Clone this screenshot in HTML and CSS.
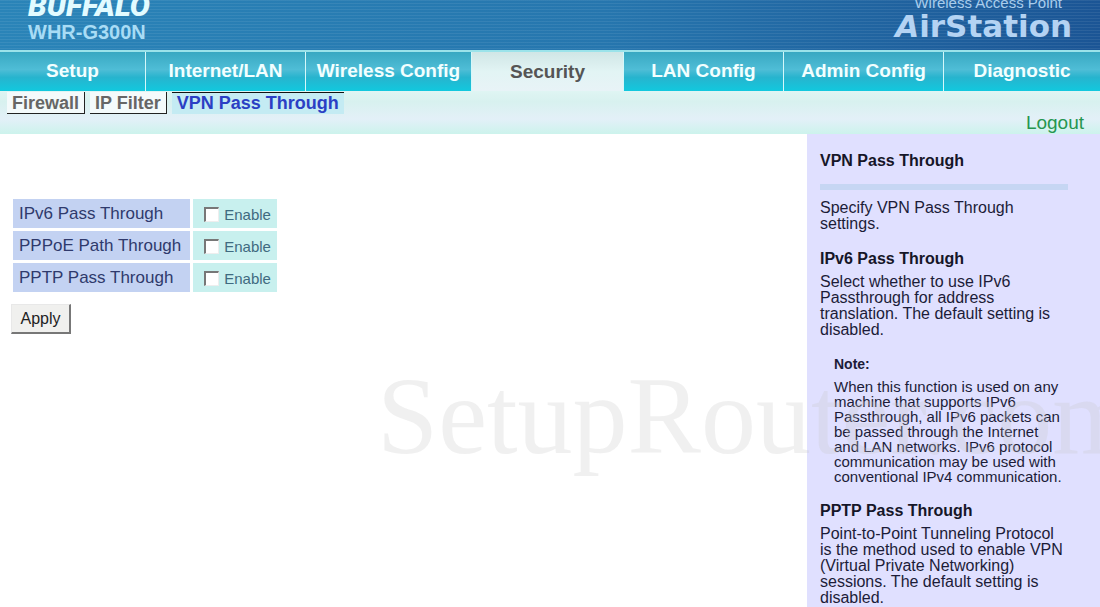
FILE: index.html
```html
<!DOCTYPE html>
<html lang="en">
  <head>
    <meta charset="UTF-8" />
    <title>VPN Pass Through</title>
    <link rel="stylesheet" href="styles.css">
  </head>
  <body>
    <header class="header">
      <div class="brand">
        <strong class="logo">BUFFALO</strong>
        <span class="model">WHR-G300N</span>
      </div>
      <div class="product">
        <span class="tagline">Wireless Access Point</span>
        <span class="airstation"><i>A</i>irStation</span>
      </div>
    </header>

    <nav class="menu">
      <a href="#">Setup</a>
      <a href="#">Internet/LAN</a>
      <a href="#">Wireless Config</a>
      <a href="#" class="active">Security</a>
      <a href="#">LAN Config</a>
      <a href="#">Admin Config</a>
      <a href="#">Diagnostic</a>
    </nav>

    <div class="submenu">
      <nav class="tabs">
        <a href="#">Firewall</a>
        <a href="#">IP Filter</a>
        <a href="#" class="current">VPN Pass Through</a>
      </nav>
      <a href="#" class="logout">Logout</a>
    </div>

    <div class="content">
      <main class="main">
        <form>
          <table class="settings">
            <tr>
              <th><label for="ipv6">IPv6 Pass Through</label></th>
              <td><label><input type="checkbox" id="ipv6">Enable</label></td>
            </tr>
            <tr>
              <th><label for="pppoe">PPPoE Path Through</label></th>
              <td><label><input type="checkbox" id="pppoe">Enable</label></td>
            </tr>
            <tr>
              <th><label for="pptp">PPTP Pass Through</label></th>
              <td><label><input type="checkbox" id="pptp">Enable</label></td>
            </tr>
          </table>
          <button type="button" class="apply">Apply</button>
        </form>
      </main>

      <aside class="help">
        <h2>VPN Pass Through</h2>
        <hr>
        <p>Specify VPN Pass Through settings.</p>
        <h2>IPv6 Pass Through</h2>
        <p>Select whether to use IPv6 Passthrough for address translation. The default setting is disabled.</p>
        <div class="note">
          <h3>Note:</h3>
          <p>When this function is used on any machine that supports IPv6 Passthrough, all IPv6 packets can be passed through the Internet and LAN networks. IPv6 protocol communication may be used with conventional IPv4 communication.</p>
        </div>
        <h2>PPTP Pass Through</h2>
        <p>Point-to-Point Tunneling Protocol is the method used to enable VPN (Virtual Private Networking) sessions. The default setting is disabled.</p>
      </aside>
      <div class="watermark">SetupRouter.com</div>
    </div>
  </body>
</html>
```
FILE: styles.css
```css
* {
  box-sizing: border-box;
}
body {
  margin: 0;
  font-family: "Liberation Sans", Arial, sans-serif;
  font-size: 16px;
  line-height: 16px;
  color: #1c1c38;
  background: #fff;
  overflow: hidden;
}
a {
  text-decoration: none;
}
.header {
  display: flex;
  justify-content: space-between;
  align-items: flex-end;
  height: 50px;
  padding: 0 28px 8px 28px;
  overflow: hidden;
  background:
    repeating-linear-gradient(rgba(255, 255, 255, 0.07) 0 1px, transparent 1px 3px),
    linear-gradient(90deg, #2a84b8, #2676ae 55%, #1b5595);
}
.brand,
.product {
  display: flex;
  flex-direction: column;
}
.logo {
  font-family: Roboto, sans-serif;
  font-weight: 900;
  font-style: italic;
  font-size: 30px;
  line-height: 32px;
  color: #e2fbff;
}
.model {
  font-size: 20px;
  font-weight: bold;
  line-height: 20px;
  color: #a8dcf5;
}
.product {
  align-items: flex-end;
}
.tagline {
  padding-right: 10px;
  font-size: 15px;
  line-height: 16px;
  color: #a9cdec;
}
.airstation {
  font-family: "DejaVu Sans", sans-serif;
  font-weight: bold;
  font-size: 31px;
  line-height: 31px;
  color: #b4d3f3;
}
.menu {
  display: grid;
  grid-template-columns: 146fr 160fr 166fr 152fr 160fr 160fr 156fr;
  height: 41px;
  border-top: 2px solid #9be3ea;
}
.menu a {
  display: flex;
  justify-content: center;
  align-items: center;
  padding-bottom: 2px;
  border-right: 1px solid #d5f8fa;
  font-size: 19px;
  font-weight: bold;
  color: #f2ffff;
  background: linear-gradient(#38a8c2, #4fbdd6 45%, #27b4ce 65%, #12c8de);
}
.menu a:last-child {
  border-right: 0;
}
.menu a.active {
  padding-bottom: 0;
  color: #555;
  background: linear-gradient(#d0e6e6, #e2f4f4 50%, #e8f3f7);
}
.submenu {
  display: flex;
  justify-content: space-between;
  align-items: flex-start;
  height: 43px;
  padding: 1px 16px 0 7px;
  background: linear-gradient(#dff5f3, #d8f1ef 25%, #e3f0f8 65%, #ccf3ec);
}
.tabs {
  display: flex;
  gap: 5px;
}
.tabs a {
  padding: 1px 5px 0;
  border-right: 1px solid #222;
  border-bottom: 1px solid #222;
  font-size: 18px;
  font-weight: bold;
  line-height: 20px;
  color: #666;
  background: #f4fafb;
}
.tabs a.current {
  padding-top: 0;
  border: 0;
  border-top: 1px solid #111;
  color: #2b3fc4;
  background: #c4ebf3;
}
.logout {
  padding-top: 21px;
  font-size: 19px;
  line-height: 20px;
  color: #259650;
}
.content {
  position: relative;
  display: flex;
  min-height: 473px;
  overflow: hidden;
}
.main {
  flex: 1;
  padding: 62px 10px 0;
}
.settings {
  border-spacing: 3px;
}
.settings th,
.settings td {
  height: 29px;
  padding: 0 6px;
  text-align: left;
}
.settings th {
  padding-right: 9px;
  font-size: 17px;
  font-weight: normal;
  color: #2f3a6c;
  background: #c3d2f2;
}
.settings td {
  padding-top: 2px;
  padding-left: 11px;
  font-size: 15px;
  color: #3f6a80;
  background: #c8f0ee;
}
.settings td label {
  display: flex;
  align-items: center;
  gap: 5px;
}
.settings input {
  appearance: none;
  width: 15px;
  height: 15px;
  margin: 0;
  border: 1px solid #eee;
  border-top: 2px solid #777;
  border-left: 2px solid #777;
  background: #fff;
}
.apply {
  display: block;
  width: 60px;
  height: 30px;
  margin: 9px 0 0 1px;
  padding: 0;
  border: 1px solid #e8e8e8;
  border-right: 2px solid #777;
  border-bottom: 2px solid #777;
  font-family: inherit;
  font-size: 16px;
  color: #222;
  background: #f0f0ee;
}
.help {
  width: 293px;
  padding: 19px 32px 0 13px;
  background: #e0e0ff;
}
.help h2,
.help h3,
.help p {
  margin: 0;
}
.help h2 {
  margin-bottom: 7px;
  font-size: 16px;
  color: #161628;
}
.help hr {
  height: 6px;
  margin: 15px 0 10px;
  border: 0;
  background: #c6d6f3;
}
.help p {
  margin-bottom: 19px;
}
.note {
  margin: 0 4px 0 14px;
  font-size: 15px;
  line-height: 15px;
}
.note h3 {
  margin-bottom: 7px;
  font-size: 14px;
}
.watermark {
  position: absolute;
  top: 222px;
  left: 377px;
  font-family: "Liberation Serif", "Times New Roman", serif;
  font-size: 110px;
  line-height: 120px;
  color: rgba(200, 200, 200, 0.27);
  pointer-events: none;
}
```
